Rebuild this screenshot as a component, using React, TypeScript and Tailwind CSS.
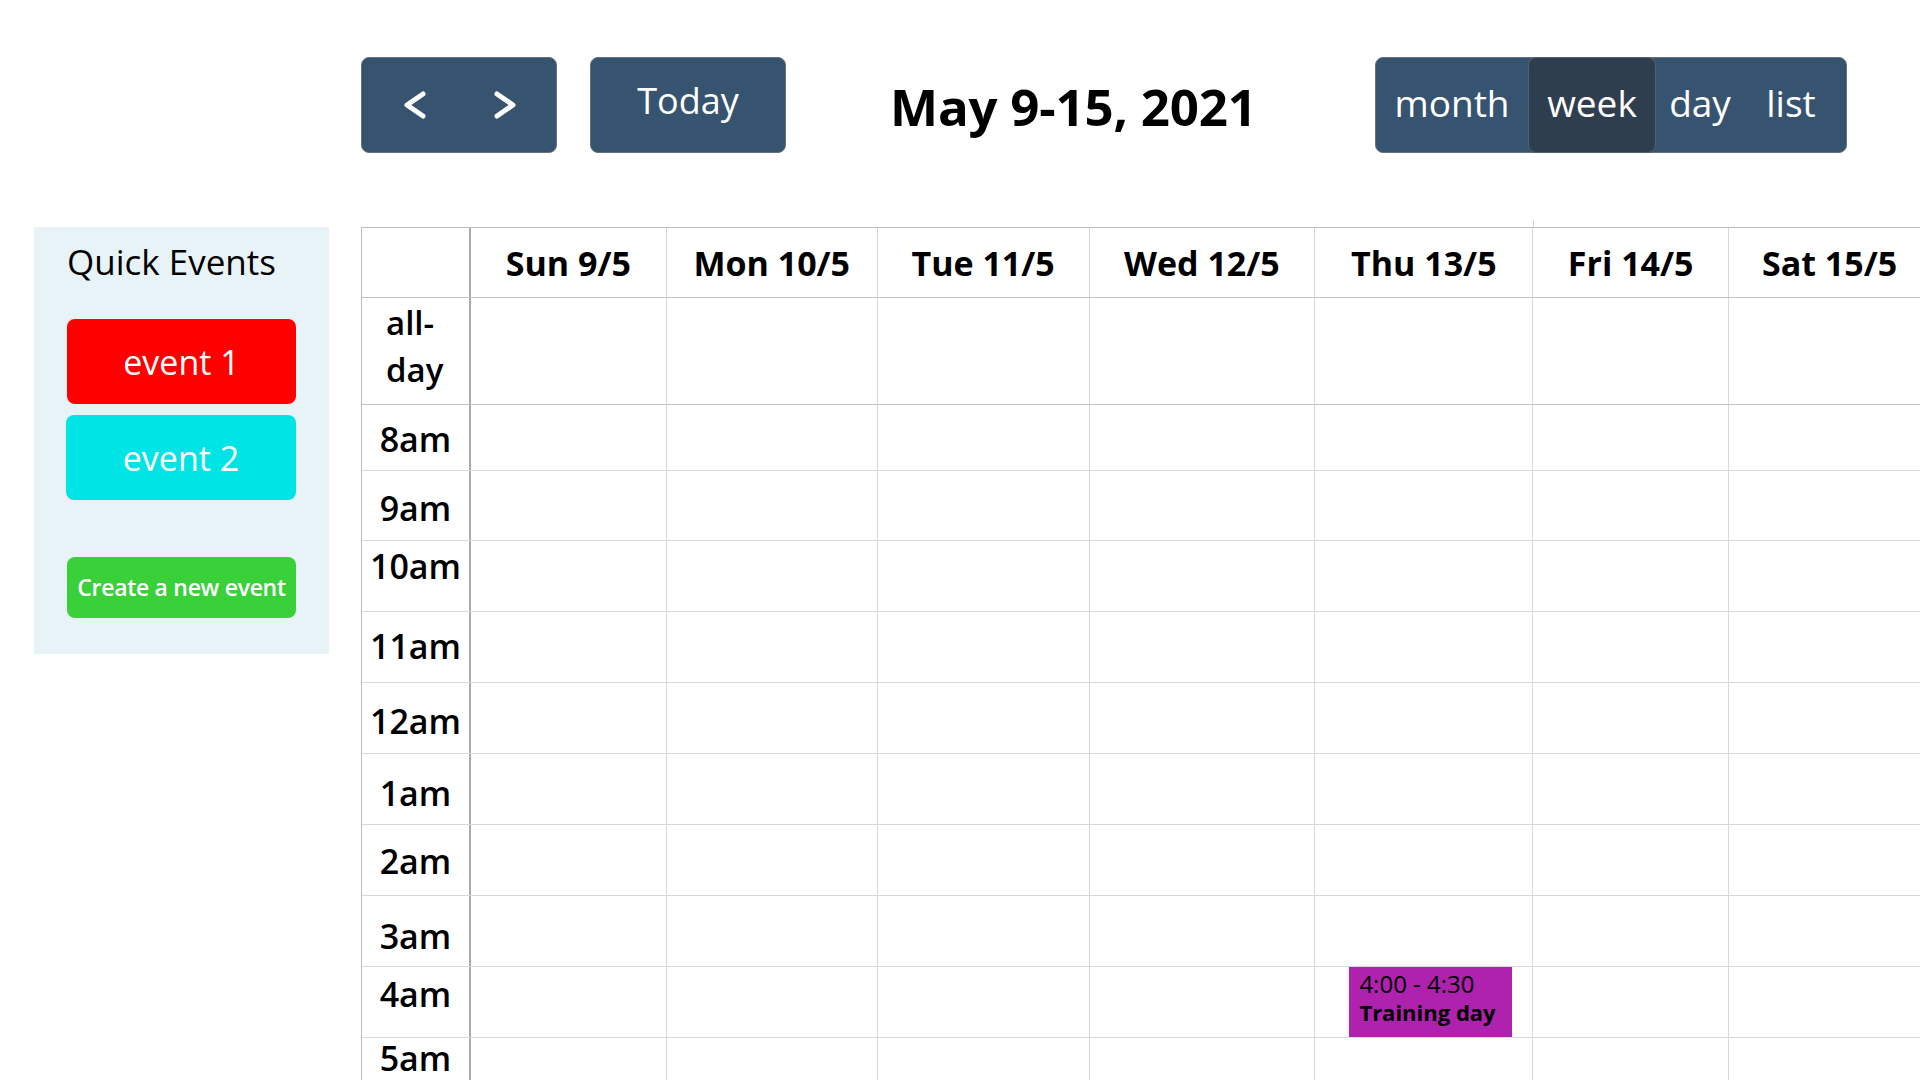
import React from "react";

const font = { fontFamily: '"Open Sans", "Noto Sans", sans-serif' };

const colW = [
  "w-[196px]",
  "w-[211px]",
  "w-[212px]",
  "w-[226px]",
  "w-[218px]",
  "w-[196px]",
  "w-[202px]",
];

const days = ["Sun 9/5", "Mon 10/5", "Tue 11/5", "Wed 12/5", "Thu 13/5", "Fri 14/5", "Sat 15/5"];

const rows = [
  { label: "8am", h: "h-[66px]", pt: "pt-[17px]" },
  { label: "9am", h: "h-[70px]", pt: "pt-[20px]" },
  { label: "10am", h: "h-[71px]", pt: "pt-[8px]" },
  { label: "11am", h: "h-[71px]", pt: "pt-[17px]" },
  { label: "12am", h: "h-[71px]", pt: "pt-[21px]" },
  { label: "1am", h: "h-[71px]", pt: "pt-[22px]" },
  { label: "2am", h: "h-[71px]", pt: "pt-[19px]" },
  { label: "3am", h: "h-[71px]", pt: "pt-[23px]" },
  { label: "4am", h: "h-[71px]", pt: "pt-[10px]" },
  { label: "5am", h: "h-[43px]", pt: "pt-[3px]" },
];

function Chevron({ dir }: { dir: "l" | "r" }) {
  return (
    <svg width="26" height="30" viewBox="0 0 26 30" fill="none">
      <polyline
        points={dir === "l" ? "21,4 5,15 21,26" : "5,4 21,15 5,26"}
        stroke="white"
        strokeWidth="5"
        strokeLinecap="round"
        strokeLinejoin="round"
      />
    </svg>
  );
}

export default function App() {
  return (
    <div className="w-[1920px] h-[1080px] overflow-hidden bg-white text-black" style={font}>
      {/* toolbar */}
      <div className="flex items-start h-[220px] pt-[57px] pl-[361px]">
        <div className="shrink-0 flex items-center justify-between w-[196px] h-[96px] rounded-[8px] bg-[#36536f] border border-[#65717d] pl-[40px] pr-[38px]">
          <Chevron dir="l" />
          <Chevron dir="r" />
        </div>
        <div className="shrink-0 ml-[33px] flex items-center justify-center w-[196px] h-[96px] rounded-[8px] bg-[#36536f] border border-[#65717d] text-white text-[36px] leading-none pb-[8px]">
          Today
        </div>
        <div className="shrink-0 ml-[104px] w-[485px] h-[96px] flex items-center text-[51px] font-bold leading-none tracking-[-0.2px] pt-[2px]">
          May 9-15, 2021
        </div>
        <div className="shrink-0 flex w-[472px] h-[96px] rounded-[8px] bg-[#36536f] border border-[#65717d] text-white text-[37px] leading-none">
          <div className="w-[152px] flex items-center justify-center pb-[6px]">month</div>
          <div className="w-[128px] flex items-center justify-center pb-[6px] bg-[#2f3e4f] rounded-[8px] border border-[#56606a] -my-px">week</div>
          <div className="w-[88px] flex items-center justify-center pb-[6px]">day</div>
          <div className="w-[102px] flex items-center justify-center pb-[6px] pr-[8px]">list</div>
        </div>
      </div>

      {/* body */}
      <div className="flex items-start pl-[34px] gap-[32px]">
        {/* sidebar */}
        <div className="shrink-0 mt-[7px] w-[295px] h-[427px] bg-[#e8f3f7] pl-[33px] pt-[17px]">
          <div className="text-[35px] leading-none">Quick Events</div>
          <div className="mt-[40px] w-[229px] h-[85px] rounded-[8px] bg-[#ff0000] text-white text-[34px] leading-none flex items-center justify-center">
            event 1
          </div>
          <div className="mt-[11px] -ml-px w-[230px] h-[85px] rounded-[8px] bg-[#00e4e6] text-white text-[34px] leading-none flex items-center justify-center">
            event 2
          </div>
          <div className="mt-[57px] w-[229px] h-[61px] rounded-[8px] bg-[#3ad03a] text-white text-[23px] font-semibold leading-none flex items-center justify-center tracking-[-0.3px]">
            Create a new event
          </div>
        </div>

        {/* calendar */}
        <div className="flex flex-col shrink-0">
          <div className="h-[7px] flex">
            <div className="ml-[1172px] w-px h-full bg-[#d4d4d4]" />
          </div>
          <div className="border-t border-l border-[#bdbdbd] w-[1570px]">
            {/* header */}
            <div className="flex h-[70px] border-b border-[#c4c4c4]">
              <div className="w-[109px] border-r-2 border-[#ababab]" />
              {days.map((d, i) => (
                <div
                  key={d}
                  className={`${colW[i]} border-r border-[#d8d8d8] flex items-center justify-center text-[34px] font-bold leading-none`}
                >
                  {d}
                </div>
              ))}
            </div>
            {/* all-day */}
            <div className="flex h-[107px] border-b border-[#c4c4c4]">
              <div className="w-[109px] border-r-2 border-[#ababab] pl-[24px] pt-[1px] text-[33px] font-semibold leading-[47px]">
                all-
                <br />
                day
              </div>
              {days.map((d, i) => (
                <div key={d} className={`${colW[i]} border-r border-[#d8d8d8]`} />
              ))}
            </div>
            {/* hours */}
            {rows.map((r) => (
              <div key={r.label} className={`flex ${r.h} border-b border-[#d8d8d8]`}>
                <div
                  className={`w-[109px] border-r-2 border-[#ababab] text-center text-[34px] font-semibold leading-none ${r.pt}`}
                >
                  {r.label}
                </div>
                {days.map((d, i) => (
                  <div key={d} className={`${colW[i]} border-r border-[#d8d8d8]`}>
                    {r.label === "4am" && i === 4 ? (
                      <div className="ml-[34px] w-[163px] h-[70px] bg-[#ae22ae] pl-[10px] pt-[2px] leading-[29px] text-black">
                        <div className="text-[24px]">4:00 - 4:30</div>
                        <div className="text-[22px] font-bold">Training day</div>
                      </div>
                    ) : null}
                  </div>
                ))}
              </div>
            ))}
          </div>
        </div>
      </div>
    </div>
  );
}
